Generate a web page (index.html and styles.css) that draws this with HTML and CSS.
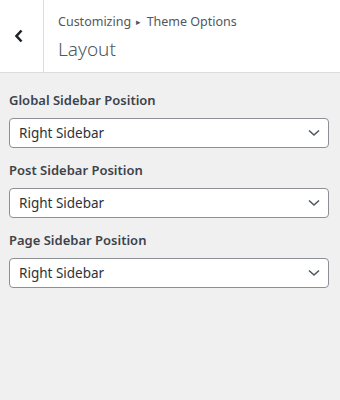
FILE: index.html
```html
<!DOCTYPE html>
<html lang="en">
<head>
    <meta charset="UTF-8">
    <title>Layout</title>
    <link rel="stylesheet" href="styles.css">
</head>
<body>
    <div class="panel">
        <div class="panel-header">
            <button class="back" aria-label="Back">
                <svg width="10" height="14" viewBox="0 0 10 14"><path d="M7.5 1.5 L2.5 7 L7.5 12.5" fill="none" stroke="#1d2327" stroke-width="2.6"/></svg>
            </button>
            <div class="title">
                <div class="crumbs">Customizing <span class="sep">&#9656;</span> Theme Options</div>
                <h2>Layout</h2>
            </div>
        </div>
        <div class="controls">
            <div class="control">
                <label>Global Sidebar Position</label>
                <div class="select">Right Sidebar
                    <svg width="12" height="8" viewBox="0 0 12 8"><path d="M1 1.5 L6 6 L11 1.5" fill="none" stroke="#50575e" stroke-width="1.6"/></svg>
                </div>
            </div>
            <div class="control">
                <label>Post Sidebar Position</label>
                <div class="select">Right Sidebar
                    <svg width="12" height="8" viewBox="0 0 12 8"><path d="M1 1.5 L6 6 L11 1.5" fill="none" stroke="#50575e" stroke-width="1.6"/></svg>
                </div>
            </div>
            <div class="control">
                <label>Page Sidebar Position</label>
                <div class="select">Right Sidebar
                    <svg width="12" height="8" viewBox="0 0 12 8"><path d="M1 1.5 L6 6 L11 1.5" fill="none" stroke="#50575e" stroke-width="1.6"/></svg>
                </div>
            </div>
        </div>
    </div>
</body>
</html>
```

FILE: styles.css
```css
body {
    margin: 0;
    background-color: #f0f0f1;
    font-family: "Noto Sans", "Open Sans", sans-serif;
    color: #3c434a;
}

.panel-header {
    display: flex;
    height: 72px;
    background-color: #fff;
    border-bottom: 1px solid #dcdcde;
}

.back {
    width: 44px;
    border: 0;
    border-right: 1px solid #dcdcde;
    background: #fff;
    padding: 0 6px 0 0;
    display: flex;
    justify-content: center;
    align-items: center;
}

.title {
    padding: 11px 0 0 14px;
}

.crumbs {
    font-size: 12.5px;
    line-height: 21px;
    color: #50575e;
}

.sep {
    font-size: 9px;
    position: relative;
    top: -1px;
    margin: 0 2px;
}

.title h2 {
    margin: 2px 0 0;
    font-size: 19px;
    font-weight: 300;
    line-height: 28px;
    color: #50575e;
}

.controls {
    padding: 17px 11px 0 9px;
}

.control {
    margin-bottom: 12px;
}

.control label {
    display: block;
    font-size: 13px;
    font-weight: 600;
    line-height: 21px;
    margin-bottom: 7px;
    color: #3c434a;
}

.select {
    display: flex;
    justify-content: space-between;
    align-items: center;
    height: 28px;
    padding: 0 8px 0 9px;
    background-color: #fff;
    border: 1px solid #8c8f94;
    border-radius: 4px;
    font-size: 13.5px;
    color: #2c3338;
}
```
